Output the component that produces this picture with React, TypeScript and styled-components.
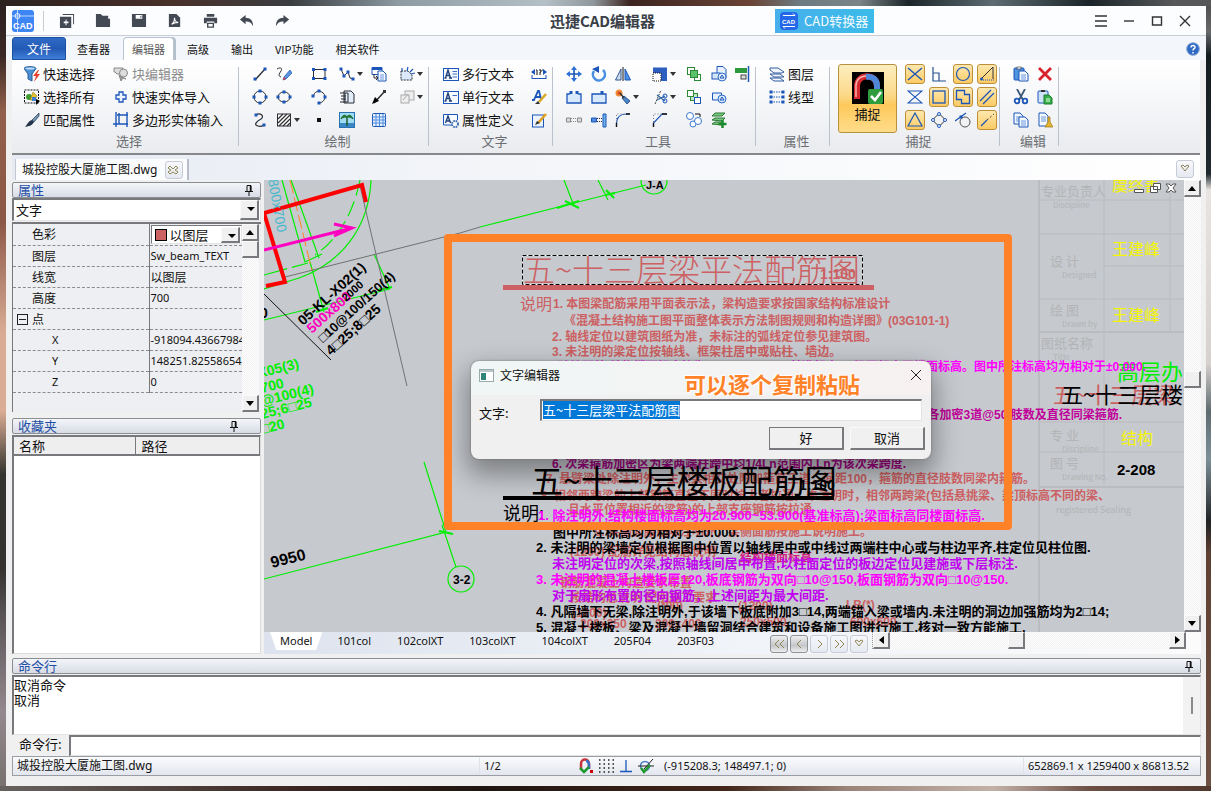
import React, { useEffect, useRef } from "react";
import styled, { createGlobalStyle, css } from "styled-components";

const ui = `"Noto Sans", "Noto Sans CJK SC", sans-serif`;
const cjk = `"Noto Sans CJK SC", sans-serif`;
const cad = `"Liberation Sans", "Noto Sans CJK SC", sans-serif`;

const Global = createGlobalStyle`
  * { box-sizing: border-box; }
  body { margin: 0; font-family: ${ui}; font-size: 12px; color: #111; }
  button, input, select { font: inherit; color: inherit; }
  button { padding: 0; border: 0; background: none; }
`;

/* ---------- shell ---------- */
const Desktop = styled.div`
  min-height: 100vh;
  display: flex;
  padding: 6px 5px 5px 6px;
  background:
    linear-gradient(90deg, #2b211f, #49302a 14%, #3a3d40 24%, #8d9ba3 33%, #b4c0c6 45%, #8e979b 49%, #3c2420 52%, #6a4436 62%, #6d7a80 66%, #7b8588 71%, #1b2529 75%, #5c6c72 82%, #1a2428 90%, #57585a 97%) top / 100% 6px no-repeat,
    linear-gradient(90deg, #67625f, #3b2520 25%, #1f1510 40%, #44261a 60%, #9b8478 70%, #c3b1a8 82%, #6d4f44 90%, #53382e) bottom / 100% 5px no-repeat,
    linear-gradient(180deg, #4a4b4c, #68696a 4%, #141c20 7%, #20292d 22%, #e8e4e2 24%, #d6d0ce 46%, #5e6b6f 52%, #7c9098 58%, #1f2224 66%, #5f4033 70%, #6e5044) right / 5px 100% no-repeat,
    linear-gradient(180deg, #2b2020, #3a2825 7%, #92604a 14%, #8c5846 28%, #d9ac93 42%, #d9ac93 52%, #33342f 60%, #35322f 72%, #5b5558 78%, #94898e 90%, #77706d) left / 6px 100% no-repeat;
`;
const Window = styled.div`
  flex: 1;
  min-width: 0;
  display: flex;
  flex-direction: column;
  background: #f0f0f1;
`;
const Bar = styled.div`display: flex; align-items: center;`;

const TitleBar = styled.header`
  height: 30px;
  display: grid;
  grid-template-columns: 1fr auto 1fr;
  align-items: center;
  background: #fcfdfe;
  border-bottom: 1px solid #c9cdd6;
  padding: 0 13px 0 6px;
`;
const Logo = styled.svg`width: 22px; height: 22px;`;
const LogoSplit = styled.span`width: 1px; height: 20px; background: #c9ccd0; margin: 0 15px 0 9px;`;
const QuickButton = styled.button`width: 16px; height: 16px; margin-right: 20px; svg { display: block; }`;
const AppTitle = styled.h1`margin: 0; font: 700 15px/20px ${cjk}; color: #3a3f48;`;
const TitleRight = styled(Bar)`justify-content: space-between; padding-left: 120px;`;
const Converter = styled.button`
  height: 24px;
  display: flex;
  align-items: center;
  gap: 6px;
  padding: 0 6px 0 5px;
  color: #f4fbff;
  background: linear-gradient(90deg, #47b0ec, #3cbbe9);
  font: 13px/20px ${cjk};
  white-space: nowrap;
`;
const Controls = styled(Bar)`gap: 12px; button { width: 16px; height: 16px; } svg { display: block; }`;

const TabBar = styled.nav`
  height: 24px;
  display: flex;
  align-items: stretch;
  gap: 4px;
  padding: 1px 6px 0;
  background: #f3f6fb;
`;
const FileTab = styled.button`
  width: 54px;
  margin-right: -2px;
  color: #fff;
  border: 1px solid #1b4fa0;
  border-radius: 3px 3px 0 0;
  background: linear-gradient(#2f6bc6, #2359b5 50%, #3f7fd8);
  font: 12px/20px ${cjk};
`;
const Tab = styled.button<{ $on?: boolean }>`
  padding: 0 8px;
  border: 1px solid transparent;
  border-bottom: 0;
  border-radius: 4px 4px 0 0;
  font: 11px/22px ${cjk};
  ${(p) => p.$on && css`background: #fff; border-color: #b8c4d4; color: #555; box-shadow: 2px 0 0 #b5bfca;`}
`;
const Help = styled.button`margin-left: auto; width: 14px; align-self: center; height: 14px; svg { display: block; }`;

/* ---------- ribbon ---------- */
const Ribbon = styled.section`
  height: 95px;
  margin: 0 6px;
  display: flex;
  background: linear-gradient(#fff, #f7f8fa 40%, #e9ebee);
  border-bottom: 2px solid #85878a;
`;
const Group = styled.div<{ $w: number; $pad: number }>`
  width: ${(p) => p.$w}px;
  padding: 2px 0 0;
  position: relative;
  flex: none;
  display: flex;
  flex-direction: column;
  & > div { padding-left: ${(p) => p.$pad}px; }
  &::after {
    content: "";
    position: absolute;
    right: 0;
    top: 7px;
    bottom: 7px;
    width: 1px;
    background: #bcc2cc;
  }
`;
const GroupName = styled.span`padding-left: 7px; text-align: center; font: 13px/20px ${cjk}; color: #6b6e73;`;
const Cells = styled.div<{ $cols: string }>`
  display: grid;
  grid-template-columns: ${(p) => p.$cols};
  grid-auto-rows: 23px;
  align-items: center;
`;
const Tool = styled.button<{ $off?: boolean }>`
  display: flex;
  align-items: center;
  gap: 3px;
  font: 13px/20px ${cjk};
  white-space: nowrap;
  color: ${(p) => (p.$off ? "#8c8c8c" : "#111")};
  svg { flex: none; }
`;
const Caret = styled.i`
  margin-left: -1px;
  border: 3px solid transparent;
  border-top: 4px solid #333;
  border-bottom: 0;
`;
const SnapRow = styled.div`display: flex; gap: 8px; height: 69px;`;
const Snap = styled.button`
  width: 59px;
  height: 69px;
  margin-top: 2px;
  border: 1px solid #b8913f;
  border-radius: 3px;
  background: linear-gradient(#fdeebf, #fbd98a 45%, #fdc95b 60%, #ffdc8a);
  display: flex;
  flex-direction: column;
  align-items: center;
  padding-top: 7px;
  font: 13px/20px ${cjk};
`;
const Toggle = styled.button<{ $on?: boolean }>`
  width: 20px;
  height: 20px;
  display: grid;
  place-items: center;
  border-radius: 3px;
  border: 1px solid ${(p) => (p.$on ? "#bd8f37" : "transparent")};
  background: ${(p) => (p.$on ? "linear-gradient(#fde8b0,#fdcb64)" : "none")};
`;

/* ---------- document strip ---------- */
const DocStrip = styled.div`
  height: 25px;
  display: flex;
  align-items: flex-end;
  margin: 0 6px;
  padding: 0 6px 0 3px;
  background: linear-gradient(90deg, #e6eaf3, #f3f5f9 40%, #fff);
`;
const DocTab = styled.div`
  height: 21px;
  display: flex;
  align-items: center;
  gap: 8px;
  padding: 0 4px 0 6px;
  background: #fbfcfd;
  border-right: 2px solid #b8bdc6;
  border-left: 1px solid #c3c8d0;
  font: 12px/20px ${ui};
`;
const SmallKey = styled.button<{ $dim?: boolean }>`
  width: 18px;
  height: 18px;
  display: grid;
  place-items: center;
  border: 1px solid ${(p) => (p.$dim ? "#8e9196" : "#c6cbd6")};
  border-radius: 3px;
  background: ${(p) => (p.$dim ? "linear-gradient(#eee,#c4c6c9 60%,#eee)" : "linear-gradient(#f7f8fb,#e6e9f1)")};
`;
const DocMenu = styled(SmallKey)`margin: 0 0 2px auto;`;

/* ---------- body ---------- */
const Body = styled.main`
  flex: 1;
  min-height: 0;
  display: flex;
  gap: 3px;
  padding: 0 5px 0 6px;
`;
const Side = styled.aside`
  width: 249px;
  flex: none;
  display: flex;
  flex-direction: column;
  padding-top: 2px;
`;
const PanelHead = styled.div<{ $inset?: number }>`
  height: 16px;
  flex: none;
  display: flex;
  align-items: center;
  justify-content: space-between;
  padding: 0 ${(p) => p.$inset ?? 7}px 0 5px;
  border: 1px solid #8b8e93;
  border-radius: 2px;
  background: linear-gradient(#f3f5f9, #d8dce6);
  color: #1f4fa5;
  font: 13px/14px ${cjk};
`;
const FavHead = styled(PanelHead)`margin-top: 6px;`;
const sunken = css`
  border: 1px solid;
  border-width: 2px 1px 1px 2px;
  border-color: #77797c #e3e3e3 #e3e3e3 #77797c;
  background: #fff;
`;
const raised = css`
  border: 1px solid;
  border-width: 1px 2px 2px 1px;
  border-color: #fafafa #77797c #77797c #fafafa;
  background: #f0f0f0;
`;
const SelectWrap = styled.div`
  position: relative;
  display: flex;
  &::after {
    content: "";
    position: absolute;
    right: 6px;
    top: 9px;
    border: 4px solid transparent;
    border-top-color: #000;
    border-bottom: 0;
    pointer-events: none;
  }
  &::before {
    content: "";
    position: absolute;
    right: 2px;
    top: 2px;
    bottom: 1px;
    width: 16px;
    ${raised}
    pointer-events: none;
  }
`;
const KindSelect = styled.select`
  ${sunken}
  appearance: none;
  flex: 1;
  min-width: 0;
  height: 23px;
  padding: 0 2px;
  font: 13px/20px ${cjk};
`;
const LayerSelect = styled(KindSelect)`height: 19px; padding-left: 18px; border-width: 1px; font: 13px/17px ${cjk};`;
const Swatch = styled.span`
  position: absolute;
  z-index: 1;
  left: 4px;
  top: 4px;
  width: 12px;
  height: 12px;
  background: #cd6265;
  border: 1px solid #000;
`;
const Props = styled.div`
  height: 190px;
  flex: none;
  display: flex;
  margin-top: 1px;
  border-top: 2px solid #77797c;
  border-left: 1px solid #77797c;
  background: #eeeff2;
`;
const PropTable = styled.table`
  width: 229px;
  align-self: flex-start;
  table-layout: fixed;
  border-collapse: collapse;
  font: 11px/16px ${ui};
  th, td { height: 21px; padding: 0; border-bottom: 1px dashed #8a8c90; white-space: nowrap; overflow: hidden; font-weight: 400; text-align: left; }
  th { width: 136px; border-right: 1px solid #77797c; padding-left: 19px; }
  th.sub { padding-left: 39px; }
  th.top { padding-left: 4px; }
  td { padding-left: 1px; }
  .c { font: 12px/16px ${cjk}; }
`;
const Box = styled.span`
  display: inline-block;
  width: 11px;
  height: 11px;
  margin-right: 4px;
  border: 1px solid #222;
  vertical-align: -1px;
  background: linear-gradient(#222, #222) center / 7px 1px no-repeat;
`;
const Scroll = styled.div<{ $h?: boolean }>`
  flex: none;
  display: flex;
  flex-direction: ${(p) => (p.$h ? "row" : "column")};
  ${(p) => (p.$h ? "height: 17px;" : "width: 17px;")}
  background: repeating-conic-gradient(#fff 0 25%, #f0f0f0 0 50%) 0 0 / 2px 2px;
`;
const Key = styled.button`
  ${raised}
  width: 17px;
  height: 17px;
  flex: none;
  display: grid;
  place-items: center;
`;
const Gap = styled.span<{ $grow: number }>`flex: ${(p) => p.$grow} 1 0;`;

const FavTable = styled.table`
  border-collapse: collapse;
  width: 100%;
  font: 13px/17px ${cjk};
  th { height: 18px; padding: 0 6px 0 5px; text-align: left; font-weight: 400; background: #eeeeef; border-right: 1px solid #77797c; border-bottom: 2px solid #77797c; }
`;
const FavBox = styled.div`
  flex: 1;
  margin-top: 1px;
  border: 1px solid #dcdcdc;
  border-top: 2px solid #77797c;
  border-left: 2px solid #77797c;
  background: #fff;
`;

const Work = styled.section`flex: 1; min-width: 0; display: flex; flex-direction: column;`;
const View = styled.div`flex: 1; display: flex; min-height: 452px;`;
const Canvas = styled.div`
  flex: 1;
  position: relative;
  overflow: hidden;
  background: #c6c9ce;
  & > svg { position: absolute; inset: 0; width: 100%; height: 100%; }
`;
const Mark = styled.div`
  position: absolute;
  left: 180px;
  top: 54px;
  width: 568px;
  height: 296px;
  border: 8px solid #ff8228;
  border-radius: 4px;
  pointer-events: none;
`;
const Dialog = styled.form`
  position: absolute;
  left: 207px;
  top: 181px;
  width: 460px;
  height: 98px;
  border-radius: 8px;
  background: linear-gradient(100deg, #f0f6f6, #f4f3f3 60%, #f7f1f1) top / 100% 34px no-repeat, #f0f0f0;
  box-shadow: 0 0 2px #666, 0 12px 26px 4px rgba(0, 0, 0, 0.36);
  font: 12px/16px ${cjk};
`;
const DialogHead = styled.div`
  height: 28px;
  display: flex;
  align-items: center;
  gap: 6px;
  padding: 0 8px;
  border-radius: 8px;
  button { margin-left: auto; width: 14px; height: 14px; }
  svg { display: block; }
`;
const DialogLine = styled.div`
  display: flex;
  align-items: center;
  padding: 10px 9px 0 8px;
  font: 13px/16px ${cjk};
  label { width: 61px; padding-top: 6px; }
  input { ${sunken} flex: 1; min-width: 0; height: 22px; padding: 0 1px 3px; outline: 0; }
  input::selection { background: #0078d7; color: #fff; }
`;
const DialogKeys = styled.div`
  display: flex;
  justify-content: flex-end;
  gap: 6px;
  padding: 6px 6px 0 0;
`;
const DialogKey = styled.button<{ $main?: boolean }>`
  ${raised}
  ${(p) => p.$main && css`border-color: #77797c;`}
  width: 75px;
  height: 23px;
  font: 13px/16px ${cjk};
`;
const Note = styled.strong`
  position: absolute;
  left: 420px;
  top: 188px;
  font: 700 22px/30px ${cjk};
  color: #ff8228;
  text-shadow: 0 0 2px #fff, 1px 1px 0 #fff, -1px -1px 0 #fff;
`;
const ChildKeys = styled.div`
  position: absolute;
  right: 7px;
  top: 2px;
  display: flex;
  gap: 4px;
  button { width: 12px; height: 12px; }
  svg { display: block; }
`;
const SheetRow = styled.div`
  height: 22px;
  flex: none;
  display: flex;
  align-items: flex-start;
  padding-left: 6px;
  background: linear-gradient(90deg, #dde3ee, #f0f3f8 50%, #fbfbfc);
`;
const Sheet = styled.button<{ $on?: boolean }>`
  height: 18px;
  padding: 0 13px;
  font: 11px/16px ${ui};
  ${(p) => p.$on && css`background: #fff; clip-path: polygon(0 0, 100% 0, 88% 100%, 12% 100%); padding: 0 10px; margin-right: 2px;`}
`;
const SheetKeys = styled.div`margin: 3px 4px 0 auto; display: flex; gap: 2px;`;
const HScroll = styled(Scroll)`width: 314px; margin-right: 15px; border-left: 1px dotted #999;`;

/* ---------- bottom ---------- */
const Bottom = styled.footer`padding: 4px 5px 10px 6px;`;
const Log = styled.div`
  ${sunken}
  height: 60px;
  margin-top: 1px;
  display: flex;
  justify-content: space-between;
  font: 13px/15px ${cjk};
  p { margin: 0; }
`;
const LogRail = styled.div`width: 17px; background: #f2f2f2; display: grid; place-items: center; &::after { content: ""; width: 2px; height: 17px; background: #8b8b8b; }`;
const Command = styled.div`
  display: flex;
  align-items: center;
  height: 21px;
  font: 13px/16px ${cjk};
  label { width: 57px; padding: 0 0 3px 7px; }
  input { ${sunken} flex: 1; height: 21px; min-width: 0; outline: 0; }
`;
const Status = styled.div`
  height: 20px;
  display: flex;
  align-items: center;
  border: 1px solid #9a9da3;
  background: linear-gradient(#fafbfc, #e3e6ef);
  font: 11px/16px ${ui};
  white-space: nowrap;
  .file { flex: 0 0 466px; padding-left: 4px; font-size: 12px; }
  .page { flex: 0 0 99px; padding-left: 4px; border-left: 1px solid #dfe2e8; }
  .pos { flex: 1; padding-left: 6px; }
  .size { border-left: 1px solid #dfe2e8; padding: 0 11px 0 4px; }
  svg { flex: none; margin-right: 4px; }
`;

/* ---------- icons ---------- */
const B = "#1c56b8";
const D = "#2a2d33";
const dots = (pts: number[][]) => pts.map(([x, y], i) => <rect key={i} x={x - 1.5} y={y - 1.5} width="3" height="3" fill={B} />);
const page = (x: number, y: number, w = 9, h = 11) => (
  <g>
    <path d={`M${x} ${y}h${w - 3}l3 3v${h - 3}h-${w}z`} fill="#f4f9ff" stroke={B} />
    <path d={`M${x + 2} ${y + 4}h${w - 4}m-${w - 4} 2h${w - 4}m-${w - 4} 2h${w - 4}`} stroke="#4d82d6" strokeWidth=".8" />
  </g>
);
const art: Record<string, React.ReactNode> = {
  filter: <><path d="M0 2.500c0-2.500 12-2.500 12 0L8 8v7l-4-2V8z" fill="#4d8fd0" stroke="#2b5f9c" /><ellipse cx="6" cy="2.600" rx="4.500" ry="1" fill="#bfe0fa" /><path d="M14 4l-5 6h3l-2 6 6-8h-3l2-4z" fill="#e8402e" /></>,
  selectAll: <><rect x=".5" y="1" width="14" height="13" fill="none" stroke="#111" strokeDasharray="2 1" /><circle cx="5" cy="8" r="3" fill="#3f9b2e" /><path d="M9 3l4 4-2 4H6z" fill="#e8c12c" stroke="#8d7a18" strokeWidth=".6" /><rect x="8" y="8" width="4" height="4" fill="#3c7fd0" /><path d="M12 10v6l4-4z" /></>,
  brush: <><path d="M15 1L8 8l2 2 5-6z" fill="#7895b4" stroke="#31455e" strokeWidth=".8" /><path d="M8 8l2 2c-2 4-5 4-9 5 2-2 3-6 7-7z" fill="#24344c" /></>,
  blockEdit: <g fill="#ddd" stroke="#8a8a8a"><path d="M1 2h9v6H4L2 6H1z" /><circle cx="10.500" cy="7" r="4" /><path d="M6 9l2 6 2-3 3 1z" fill="#999" /></g>,
  plus: <path d="M6 3h4v3h3v4h-3v3H6v-3H3V6h3z" fill="#eaf3ff" stroke={B} strokeWidth="1.300" />,
  frame: <path d="M3 0v15M0 12h15M6 1v11M4 3h11M14 0v15" fill="none" stroke={B} strokeWidth="1.400" />,
  line: <><path d="M3 14L13 3" stroke={D} strokeWidth="1.300" />{dots([[3, 13], [13, 3]])}</>,
  sketch: <><path d="M1 3c3-2 6-1 4 2s-3 5 0 6" fill="none" stroke={D} /><path d="M14 4l-6 7-1 3 3-1 6-6z" fill="#5a93e0" stroke={B} strokeWidth=".7" /><path d="M8 11l-1 3 3-1z" fill="#d33" /></>,
  rect: <><path d="M2.500 3.500h11.500v9H2.500z" fill="none" stroke={D} />{dots([[2.500, 3.500], [14, 3.500], [2.500, 12.500], [14, 12.500]])}</>,
  pline: <><path d="M2 3l3 7 4-4 2 6 4 1" fill="none" stroke={D} />{dots([[2, 3], [5, 10], [9, 6], [14, 13]])}</>,
  insert: <><path d="M1 1.500h10v7H1z" fill="#fff" stroke={B} /><path d="M1 1.500h10v2.500H1z" fill={B} />{page(7, 5, 8, 10)}<path d="M3 8v4h4m-2-2l2 2-2 2" fill="none" stroke={D} /></>,
  region: <><path d="M2 5h7l4 4v5H2z" fill="#dbe9fb" stroke={D} strokeDasharray="2 1" /><path d="M8 5l1-4m2 5l3-3m-2 5l4-1M3 5V2" stroke={B} strokeWidth="1.200" /></>,
  circle: <><circle cx="8" cy="8" r="6" fill="none" stroke={D} />{dots([[8, 2], [8, 14], [2, 8], [14, 8]])}</>,
  ellipse: <><ellipse cx="8" cy="8" rx="6" ry="5" fill="none" stroke={D} />{dots([[8, 3], [8, 13], [2, 8], [14, 8]])}</>,
  arc: <><path d="M2.500 7c1-7 11-6 11.500 1 0 3-3 6-6 6" fill="none" stroke={D} />{dots([[8, 2], [2, 7], [14, 8], [8, 14]])}</>,
  scroll: <><path d="M5 2h7l3 3v9H5z" fill="#e4eefb" stroke={D} /><path d="M1 4h8v9H1m1-6h5M2 10h5M6 4v9" fill="none" stroke={D} /></>,
  ray: <><path d="M3 14L14 2" stroke={D} strokeWidth="1.500" /><path d="M1 15l3-7 4 4z" /><rect x="12" y="1" width="3" height="3" fill="#333" /></>,
  copyOff: <g fill="#eee" stroke="#aaa"><rect x="6" y="2" width="9" height="9" /><rect x="2" y="6" width="8" height="8" /><path d="M4 11l5-6" /></g>,
  spline: <><path d="M4 3c4-3 9 1 5 4-4 2-8 6-3 7 3 1 4 0 7-1" fill="none" stroke={D} strokeWidth="1.200" />{dots([[4, 3], [12, 13]])}</>,
  hatch: <><rect x="1.500" y="2" width="13" height="12" fill="#fff" stroke={D} /><path d="M2 7l5-5M2 11l9-9M3 14L14 3M7 14l7-7m-3 7l3-3" stroke="#333" strokeWidth="1.300" /></>,
  point: <rect x="6" y="6" width="4" height="4" fill="#111" />,
  image: <><rect x=".5" y=".5" width="15" height="15" fill="#9fdcf4" stroke="#2772b0" /><path d="M1 11h14v4H1z" fill="#3b86c5" /><path d="M8 5c-1-3-5-2-6 2 2-2 4-2 6-2 2 0 4 0 6 2-1-4-5-5-6-2" fill="#2a8a3a" stroke="#1d6a2c" /><path d="M8 5v9" stroke="#1d5a2c" strokeWidth="1.500" /></>,
  table: <><rect x="1.500" y="1.500" width="13" height="13" rx="1" fill="#e5f0fd" stroke={B} /><path d="M1.500 5h13M1.500 8h13M1.500 11h13M5 2v12m3.500-12v12M12 2v12" stroke="#4e8be0" /></>,
  mtext: <><rect x=".5" y="2.500" width="15" height="12" fill="#f6faff" stroke={B} /><path d="M2.500 12l2.500-8 2.500 8M4 9.500h2.500M1.500 12h2m2.500 0h3" fill="none" stroke="#1f3f7a" strokeWidth="1.400" /><path d="M9.500 5.500h4.500m-4.500 2.500h4.500m-4.500 3h4.500" stroke="#3d6fc0" /></>,
  text: <><rect x=".5" y="2.500" width="15" height="12" fill="#f6faff" stroke={B} /><path d="M2.500 12l2.500-8 2.500 8M4 9.500h2.500M1.500 12h2m2.500 0h3" fill="none" stroke="#1f3f7a" strokeWidth="1.400" /><path d="M9.500 6.500h4.500" stroke="#3d6fc0" /></>,
  attdef: <><path d="M9 13H.5V2.500h14V8" fill="#f6faff" stroke={B} /><path d="M2.500 11l2.500-7 2.500 7M4 9h2.500" fill="none" stroke="#1f3f7a" strokeWidth="1.400" /><circle cx="12" cy="12" r="3" fill="#fff" stroke="#3e6fae" strokeWidth="2" strokeDasharray="1.600 .8" /></>,
  find: <><path d="M0 6l4-3v6zm16 0l-4-3v6z" fill={B} /><path d="M1 13V9m14 4V9M1 12.500h14" stroke={B} fill="none" /><path d="M5 4h1v5M8 4h2v2H9v3M11 4h1" stroke="#111" fill="none" /></>,
  textEdit: <><path d="M1 11h2L7 2h1l2 8M4 8h5" fill="none" stroke={B} strokeWidth="1.800" /><path d="M15 5l-7 8" stroke="#d9a928" strokeWidth="2.500" /><path d="M4 15h5l-2-3z" fill="#333" /></>,
  editPen: <><rect x="1.500" y="3" width="11" height="12" fill="#eaf3ff" stroke={B} /><path d="M15 2L7 11" stroke="#e0a020" strokeWidth="2.600" /><path d="M4 13l2-4 3 2z" fill="#333" /></>,
  move: <><path d="M8 2v12M2 8h12" stroke={B} strokeWidth="1.600" /><path d="M8 0l3 4H5zm0 16l3-4H5zM0 8l4-3v6zm16 0l-4-3v6z" fill="#2b6fd6" /></>,
  rotate: <><path d="M3 5a6 6 0 1 0 9-1" fill="none" stroke="#4a90e2" strokeWidth="2.600" /><path d="M8 0v7L1 3z" fill={B} /></>,
  mirror: <><path d="M6 3v11H.5z" fill="#cfdcec" stroke="#30588f" /><path d="M8 1v14" stroke="#111" /><path d="M10 3v11h5.500z" fill="#4b93e8" stroke={B} /></>,
  scale: <><rect x="1" y="1.500" width="14" height="13.500" fill="#2c5fc0" /><rect x="1" y="7" width="8" height="8" fill="#fff" stroke="#111" strokeDasharray="1 1" /></>,
  front: <><rect x="1.500" y="1.500" width="7" height="7" fill="#fff" stroke="#2d8a34" /><rect x="8.500" y="8.500" width="6" height="6" fill="#fff" stroke="#2d8a34" /><rect x="4.500" y="4.500" width="7" height="7" fill="#5cc26a" stroke="#2d8a34" /></>,
  viewA: <><path d="M6 .5h6l3 3v9H6z" fill="#e7f1ff" stroke={B} /><rect x="1" y="7" width="8" height="6" fill="#d5e6fb" stroke={B} /><circle cx="11" cy="11" r="4" fill="#e5effc" stroke="#2e6cc7" /><path d="M9 12l2-3 2 3z" fill="none" stroke={B} /></>,
  align: <><rect x="1" y="2" width="12" height="5" fill="#2c9a3c" /><rect x="7" y="9" width="5" height="4" fill="#ddd" stroke="#444" /><path d="M14.500 0v16" stroke={B} strokeWidth="1.500" /></>,
  trim: <><path d="M4 5H1v9h14V5h-3" fill="#d9e9fd" stroke={B} strokeWidth="1.300" />{dots([[5, 3.500], [11, 3.500]])}</>,
  extend: <><path d="M1 5h14v9H1z" fill="#d9e9fd" stroke={B} strokeWidth="1.300" />{dots([[11, 3.500]])}</>,
  explode: <><circle cx="4" cy="4" r="3.500" fill="#f08a35" /><circle cx="4" cy="4" r="1.500" fill="#d9432a" /><path d="M9 7l-2 2 5 6 3-3z" fill="#4b86c8" stroke="#30588f" /><path d="M5 4l4 5" stroke="#333" strokeWidth="1.500" /></>,
  cutLine: <><path d="M3 15L9 1" stroke="#444" strokeDasharray="2 1" /><path d="M5 6l8 6m-8-1l8-4" stroke="#33679e" strokeWidth="1.300" /><circle cx="13" cy="7" r="2" fill="none" stroke={B} /><circle cx="13" cy="12" r="2" fill="none" stroke={B} /></>,
  back: <><rect x="4.500" y="4.500" width="7" height="7" fill="#bfe8c4" stroke="#2d8a34" /><rect x="1.500" y="1.500" width="6" height="6" fill="#fff" stroke="#2d8a34" /><rect x="8.500" y="8.500" width="6" height="6" fill="#fff" stroke={B} /></>,
  viewB: <><path d="M1.500 4h9v7h-9z" fill="#e7f1ff" stroke={B} /><circle cx="11" cy="10" r="4" fill="#d5e6fb" stroke="#2e6cc7" /><path d="M9 11l2-3 2 3z" fill="none" stroke={B} /></>,
  stretch: <><path d="M.5 6h4v4h-4zm11 0h4v4h-4z" fill="#ddd" stroke="#888" /><path d="M5 6.500h6M5 9.500h6" stroke="#888" strokeDasharray="1 1" /></>,
  lengthen: <><path d="M.5 6h5v4h-5z" fill="#4b8be0" stroke={B} /><path d="M6 6.500h6M6 9.500h6" stroke={D} strokeDasharray="1 1" /><path d="M12 2h3v13h-3z" fill="#6db1ec" stroke={B} /></>,
  fillet: <><path d="M1.500 15v-3c0-7 4-10 10-10h3" fill="none" stroke={B} strokeWidth="1.200" /><path d="M1.500 15v-4M11 2h4" stroke="#111" strokeWidth="1.300" /><path d="M1.500 10V2H10" fill="none" stroke="#777" strokeDasharray="1 2" /></>,
  chamfer: <><path d="M1.500 15v-4L10 2h5" fill="none" stroke={B} strokeWidth="1.200" /><path d="M1.500 15v-4M10 2h5" stroke="#111" strokeWidth="1.300" /><path d="M1.500 10V2H10" fill="none" stroke="#777" strokeDasharray="1 2" /></>,
  rings: <g fill="#fff" stroke="#3b7bd0"><circle cx="4" cy="4" r="3.500" /><circle cx="7" cy="12" r="3" /><circle cx="12" cy="9" r="3.500" /><path d="M9 2h5v3" stroke="#111" fill="none" /></g>,
  stackAdd: <><path d="M1 4l3-3h10l-3 3zm0 4l3-2h10l-3 3zm0 4l3-2h7v3z" fill="#7bc67f" stroke="#2b7a35" /><path d="M11.500 8v8m-4-4h8" stroke="#1c8a2c" strokeWidth="2.500" /></>,
  layers: <g fill="#f2f7ff" stroke="#335a9e"><path d="M1 12l4 3h10l-4-3H3z" /><path d="M1 8l4 3h10l-4-3H3z" /><path d="M1 2h8l6 4-2 1H5L1 4z" /></g>,
  ltype: <><path d="M2 3h12M2 8h12M2 13h12" stroke={B} strokeDasharray="1.500 1" />{dots([[2, 3], [14, 3], [2, 8], [14, 8], [2, 13], [14, 13]])}</>,
  sx: <path d="M1 2l14 12M1 14L15 2" stroke={B} strokeWidth="1.400" />,
  perp: <path d="M2 1v14h13M2 7h6v8" fill="none" stroke="#27508f" strokeWidth="1.200" />,
  scirc: <circle cx="8" cy="8" r="6.500" fill="none" stroke={B} strokeWidth="1.200" />,
  sang: <><path d="M2 13L14 1v12" fill="none" stroke="#333" /><path d="M4 14h11" stroke={B} strokeDasharray="1 1" /><circle cx="2.500" cy="13" r="1.500" fill={B} /></>,
  glass: <path d="M1 2h14L1 14h14L1 2z" fill="none" stroke={B} strokeWidth="1.100" />,
  ssq: <rect x="2" y="2" width="12" height="12" fill="none" stroke={B} strokeWidth="1.300" />,
  sblk: <path d="M1.500 1.500h8v4h5v9h-8v-4h-5z" fill="none" stroke={B} strokeWidth="1.300" />,
  spar: <path d="M1 12L12 1M4 15L15 4" stroke={B} strokeWidth="1.300" />,
  stri: <path d="M8 1l7 13H1z" fill="none" stroke={B} strokeWidth="1.200" />,
  quad: <><path d="M8 1.500l6.500 6.500-6.500 6.500-6.500-6.500z" fill="none" stroke={D} /><g fill="#fff" stroke={B}><circle cx="8" cy="2" r="1.500" /><circle cx="14" cy="8" r="1.500" /><circle cx="8" cy="14" r="1.500" /><circle cx="2" cy="8" r="1.500" /></g></>,
  tan: <><circle cx="10" cy="10" r="5" fill="none" stroke="#555" /><path d="M0 9L11 1" stroke={B} strokeWidth="1.200" />{dots([[6, 5]])}</>,
  sext: <><path d="M2 14l6-6" stroke={B} strokeWidth="1.300" /><path d="M8 8l7-6" stroke="#444" strokeDasharray="2 2" /></>,
  paste: <><rect x="1" y="2" width="10" height="12" rx="1" fill="#4f92dd" stroke={B} /><rect x="4" y="1" width="4" height="2" fill="#fff" stroke="#333" strokeWidth=".6" />{page(6, 5, 9, 10)}</>,
  del: <path d="M2 2l12 12M14 2L2 14" stroke="#d8232b" strokeWidth="2.800" />,
  cut: <><path d="M4 0l6 11M12 0L6 11" stroke="#3d5878" strokeWidth="1.800" /><circle cx="4" cy="12" r="2.300" fill="none" stroke={B} strokeWidth="1.800" /><circle cx="12" cy="12" r="2.300" fill="none" stroke={B} strokeWidth="1.800" /></>,
  pasteG: <><rect x="1" y="2" width="10" height="12" rx="1" fill="#cfe4fa" stroke={B} /><rect x="4" y="1" width="4" height="2" fill="#333" /><path d="M7 6h5l3 3v6H7z" fill="#35b14a" stroke="#1c7a2e" /><path d="M9 10h4m-4 2h4" stroke="#eaffea" /></>,
  copy: <>{page(1, 1, 9, 11)}{page(6, 5, 9, 10)}</>,
  clean: <>{page(2, 1, 9, 13)}<path d="M11 5h2v5l3 5H8l3-5z" fill="#e8b530" stroke="#9a7415" strokeWidth=".7" /></>,
};
const Ico = ({ n }: { n: string }) => (
  <svg width="16" height="16" viewBox="0 0 16 16" aria-hidden="true">{art[n]}</svg>
);
const arrowPath = { up: "M0 5l4-5 4 5z", down: "M0 0l4 5 4-5z", left: "M5 0v8L0 4z", right: "M0 0v8l5-4z" };
const Arrow = ({ d }: { d: keyof typeof arrowPath }) => <svg width="8" height="8" viewBox={d === "left" || d === "right" ? "-2 0 8 8" : "0 -2 8 8"}><path d={arrowPath[d]} /></svg>;
const Pin = () => <svg width="8" height="12" viewBox="0 0 8 12" fill="none" stroke="#111"><path d="M2 7V1.500h4V7M0 7.500h8M4 8v4" /><path d="M5.500 2v5" strokeWidth="1.500" /></svg>;

const quick: [string, React.ReactNode][] = [
  ["新建", <><path d="M4 1h12v11h-1V2H4z" /><path d="M1 4h12v12H1zM7 7v2H5v2h2v2h1v-2h2V9H8V7z" fillRule="evenodd" /></>],
  ["打开", <path d="M1 1h5l2 2h6v3h2v9H1z" />],
  ["保存", <path d="M1 1h15v14H1zM5 2v4h7V2zm5 1h1v2h-1z" fillRule="evenodd" />],
  ["导出", <><path d="M2 1h8l4 4v10H2z" /><path d="M5 12c3-2 3-5 3-7 0 3 2 5 4 5-3 0-5 0-7 2z" stroke="#fff" fill="none" strokeWidth="1.200" /></>],
  ["打印", <><path d="M4 1h8v3H4zM1 5h14v6h-3V9H4v2H1z" /><path d="M5 11h6v4H5z" fill="none" stroke="#444a54" strokeWidth="1.500" /></>],
  ["撤销", <path d="M7 2v3c5 0 8 3 8 9-2-4-4-5-8-5v3L1 7z" />],
  ["重做", <path d="M9 2v3c-5 0-8 3-8 9 2-4 4-5 8-5v3l6-5z" />],
];

type T = { n: string; t: string; c?: boolean; off?: boolean };
const drawTools: T[] = [
  { n: "line", t: "直线" }, { n: "sketch", t: "草图" }, { n: "rect", t: "矩形" }, { n: "pline", t: "多段线", c: true }, { n: "insert", t: "插入块" }, { n: "region", t: "区域", c: true },
  { n: "circle", t: "圆" }, { n: "ellipse", t: "椭圆" }, { n: "arc", t: "圆弧" }, { n: "scroll", t: "创建块" }, { n: "ray", t: "射线" }, { n: "copyOff", t: "复制块", c: true, off: true },
  { n: "spline", t: "样条曲线" }, { n: "hatch", t: "填充", c: true }, { n: "point", t: "点" }, { n: "image", t: "图像" }, { n: "table", t: "表格" },
];
const editTools: T[] = [
  { n: "move", t: "移动" }, { n: "rotate", t: "旋转" }, { n: "mirror", t: "镜像" }, { n: "scale", t: "缩放", c: true }, { n: "front", t: "前置" }, { n: "viewA", t: "视图" }, { n: "align", t: "对齐" },
  { n: "trim", t: "修剪" }, { n: "extend", t: "延伸" }, { n: "explode", t: "分解", c: true }, { n: "cutLine", t: "打断", c: true }, { n: "back", t: "后置" }, { n: "viewB", t: "视口" }, { n: "", t: "" },
  { n: "stretch", t: "拉伸" }, { n: "lengthen", t: "拉长" }, { n: "fillet", t: "圆角" }, { n: "chamfer", t: "倒角" }, { n: "rings", t: "编组" }, { n: "stackAdd", t: "添加图层" },
];
const snaps: [string, string, boolean][] = [
  ["sx", "交点", true], ["perp", "垂足", false], ["scirc", "圆心", true], ["sang", "延长", true],
  ["glass", "最近点", false], ["ssq", "端点", true], ["sblk", "插入点", true], ["spar", "平行", true],
  ["stri", "中点", true], ["quad", "象限点", false], ["tan", "切点", false], ["sext", "延伸线", true],
];
const clip: [string, string][] = [["paste", "粘贴"], ["del", "删除"], ["cut", "剪切"], ["pasteG", "粘贴为块"], ["copy", "复制"], ["clean", "清理"]];
const IconTools = ({ items }: { items: T[] }) => (
  <>{items.map((x, i) => x.n ? <Tool key={i} aria-label={x.t} $off={x.off}><Ico n={x.n} />{x.c && <Caret />}</Tool> : <span key={i} />)}</>
);
const TextTool = ({ n, t, off }: { n: string; t: string; off?: boolean }) => <Tool $off={off}><Ico n={n} />{t}</Tool>;

/* ---------- drawing ---------- */
const RED = "#cc6062";
const MAG = "#ff00ff";
const PUR = "#c000f0";
type Row = { x: number; y: number; f: string; s: string; end?: boolean };
const under: Row[] = [
  { x: 553, y: 308, f: RED, s: "1. 本图梁配筋采用平面表示法，梁构造要求按国家结构标准设计" },
  { x: 564, y: 325, f: RED, s: "《混凝土结构施工图平面整体表示方法制图规则和构造详图》(03G101-1)" },
  { x: 552, y: 341, f: RED, s: "2. 轴线定位以建筑图纸为准，未标注的弧线定位参见建筑图。" },
  { x: 552, y: 356, f: RED, s: "3. 未注明的梁定位按轴线、框架柱居中或贴柱、墙边。" },
  { x: 1146, y: 371, f: MAG, end: true, s: "4. 除注明外,结构楼面标高均为20.900~53.900(基准标高)，梁面标高同楼面标高。图中所注标高均为相对于±0.000." },
  { x: 914, y: 405, f: RED, end: true, s: "均为16(2);" },
  { x: 1122, y: 419, f: "#c0009a", end: true, s: "5. 主次梁相交处，主梁在次梁两侧附加箍筋各加密3道@50,肢数及直径同梁箍筋." },
  { x: 552, y: 468, f: "#a00080", s: "6. 次梁箍筋加密区为梁两端柱跨中均1/4Ln范围内,Ln为该次梁跨度." },
  { x: 1035, y: 483, f: RED, end: true, s: "7. 悬臂梁处除注明外，主次梁相交处附加箍筋三道，间距100，箍筋的直径肢数同梁内箍筋。" },
  { x: 1110, y: 500, f: RED, end: true, s: "8. 相邻两跨梁的上部钢筋直径不同时按大者拉通。未注明时，相邻两跨梁(包括悬挑梁、梁顶标高不同的梁、" },
  { x: 568, y: 514, f: RED, s: "且水平位置相近的梁筋)的上部支座钢筋按拉通" },
  { x: 872, y: 536, f: RED, end: true, s: "9. 梁侧面腰筋除注明外，梁侧面筋按施工说明施工。" },
  { x: 570, y: 556, f: RED, s: "(1200) 配筋详见结构总说明" },
  { x: 740, y: 562, f: "#d02080", s: "结构楼面标高" },
  { x: 560, y: 587, f: RED, s: "钢筋混凝土构造要求布置" },
  { x: 570, y: 602, f: RED, s: "按结构总说明 配明施工要求" },
  { x: 572, y: 617, f: RED, s: "(1200)" },
  { x: 580, y: 628, f: RED, s: "200x350" },
  { x: 657, y: 610, f: RED, s: "(*00)" },
  { x: 655, y: 628, f: RED, s: "200x400" },
  { x: 738, y: 610, f: RED, s: "(1200)" },
  { x: 740, y: 626, f: RED, s: "250x500" },
  { x: 846, y: 609, f: RED, s: "LB(*)" },
  { x: 850, y: 626, f: RED, s: "600x600" },
];
const over: Row[] = [
  { x: 538, y: 520, f: MAG, s: "1. 除注明外,结构楼面标高均为20.900~53.900(基准标高);梁面标高同楼面标高." },
  { x: 553, y: 537, f: "#000", s: "图中所注标高均为相对于±0.000." },
  { x: 536, y: 552, f: "#000", s: "2. 未注明的梁墙定位根据图中位置以轴线居中或中线过两端柱中心或与柱边平齐.柱定位见柱位图." },
  { x: 552, y: 568, f: PUR, s: "未注明定位的次梁,按照轴线间居中布置,以柱面定位的板边定位见建施或下层标注." },
  { x: 536, y: 584, f: MAG, s: "3. 未注明的混凝土楼板厚120,板底钢筋为双向□10@150,板面钢筋为双向□10@150." },
  { x: 552, y: 600, f: PUR, s: "对于扇形布置的径向钢筋，上述间距为最大间距." },
  { x: 536, y: 616, f: "#000", s: "4. 凡隔墙下无梁,除注明外,于该墙下板底附加3□14,两端锚入梁或墙内.未注明的洞边加强筋均为2□14;" },
  { x: 536, y: 632, f: "#000", s: "5. 混凝土楼板、梁及混凝土墙留洞结合建筑和设备施工图进行施工,核对一致方能施工." },
];
const Rows = ({ rows, size }: { rows: Row[]; size: number }) => (
  <g fontFamily={cad} fontSize={size} fontWeight="700">
    {rows.map((r, i) => <text key={i} x={r.x} y={r.y} fill={r.f} textAnchor={r.end ? "end" : "start"}>{r.s}</text>)}
  </g>
);
const faint: [number, number, string, string][] = [
  [1041, 196, "专业负责人", "Discipline"], [1050, 266, "设  计", "Designed"], [1050, 315, "绘  图", "Drawn by"],
  [1041, 348, "图纸名称", "Title"], [1050, 440, "专  业", "Discipline"], [1050, 468, "图  号", "Drawing No."],
];
const Drawing = () => (
  <svg>
    <g transform="translate(-264 -180)">
      <g stroke="#bbbcbf" fill="none">
        <path d="M1104 180v307M1170 180v152M1039 200h145M1039 234h145M1104 266h80M1039 299h145M1039 422h145M1039 452h145" />
        <path d="M1039 180v452M1039 332h145M1039 487h145" strokeWidth="2" />
      </g>
      <g fill="#b3b4b5" fontFamily={cjk}>
        {faint.map(([x, y, a, b]) => <g key={y}><text x={x} y={y} fontSize="13">{a}</text><text x={x + 12} y={y + 12} fontSize="8">{b}</text></g>)}
        <text x="1056" y="513" fontSize="9">registered Sealing</text>
      </g>

      <g fill="none" stroke="#00ee00" strokeWidth="1.200">
        <path d="M371 180c-2 48-30 83-72 98l-35 11" />
        <path d="M282 180l23 82 17-8M291 180l28 78" />
        <path d="M264 275l44-12" strokeDasharray="24 5" />
        <path d="M360 180c-6 30-20 58-45 75" strokeDasharray="16 6" />
        <path d="M264 320l126-31M310 262l14 50M374 254l16 35M264 579L446 532l-22-70" />
        <path d="M442 525l14 42M480 227l94-24 72-18M564 180l10 26M598 180l10 20" />
        <path d="M557 208l22-7m-14 0l14 7m26-13l10-2m-9-3l8 8M316 312l12-4m50-18l14-3M439 531l14 3" strokeWidth="2" />
        <circle cx="654" cy="181" r="13" /><circle cx="461" cy="579" r="13" />
      </g>
      <path d="M290 180l22 91" stroke="#ff8228" strokeDasharray="14 4" fill="none" />
      <path d="M285 277L460 233l20-6M360 186l47 200" stroke="#707274" fill="none" />
      <path d="M264 213l98-28 4 17M264 213l21 69-19 4" stroke="#f00" strokeWidth="4" fill="none" />
      <path d="M264 250l88-22m-18-4l18 4-18 8" stroke="#ff00c0" strokeWidth="3" fill="none" />
      <path d="M264 294l67 66" stroke="#111" fill="none" />

      <g fontFamily={cad} fontSize="14">
        <text transform="translate(268 180) rotate(80)" fill="#48b8cc">800x700</text>
        <g fontWeight="700">
          <text x="646" y="189" fontSize="11">J-A</text>
          <text transform="translate(303 326) rotate(-42)">05-KL-X02(1)</text>
          <text transform="translate(312 334) rotate(-42)" fill="#ff00c0">500x800</text>
          <text transform="translate(346 302) rotate(-42)" fontSize="11">2000</text>
          <text transform="translate(323 343) rotate(-42)" fontSize="13">□10@100/150(4)</text>
          <text transform="translate(331 356) rotate(-42)">4□25;8□25</text>
          <text x="260" y="318">0</text>
          <g fill="#00ee00">
            <text transform="translate(259 378) rotate(-14)">X05(3)</text>
            <text transform="translate(262 393) rotate(-14)">700</text>
            <text transform="translate(262 406) rotate(-14)">@100(4)</text>
            <text transform="translate(262 419) rotate(-14)">25;6□25</text>
            <text transform="translate(262 434) rotate(-14)">□20</text>
          </g>
          <text transform="translate(272 568) rotate(-14)" fontSize="16">9950</text>
          <text x="453" y="584" fontSize="12">3-2</text>
        </g>
      </g>

      <g fontFamily={cjk} fill="#f5f500" fontSize="16">
        <text x="1112" y="191">虞终善</text><text x="1112" y="255">王建峰</text><text x="1112" y="321">王建峰</text><text x="1121" y="444">结构</text>
      </g>
      <text x="1117" y="475" fontSize="15" fontWeight="700" fontFamily={cad}>2-208</text>
      <text x="1117" y="380" fontSize="22" fill="#00ee00" fontFamily={cjk}>高层办</text>
      <g fontFamily={cjk} fontSize="22">
        <text x="1053" y="403" fill={RED}>五~十三层梁</text>
        <text x="1061" y="403">五~十三层楼</text>
      </g>

      <text x="523" y="282" fontSize="32" fontWeight="300" fill={RED} fontFamily={cjk}>五~十三层梁平法配筋图</text>
      <text x="820" y="279" fontSize="14" fontWeight="700" fill={RED} fontFamily={cad}>1:100</text>
      <path d="M503 287.500h371" stroke={RED} strokeWidth="5" />
      <rect x="522.500" y="255.500" width="340" height="29" fill="none" stroke="#fff" />
      <rect x="522.500" y="255.500" width="340" height="29" fill="none" stroke="#000" strokeDasharray="4 2" />
      <text x="520" y="310" fontSize="16" fill={RED} fontFamily={cjk}>说明</text>
      <Rows rows={under} size={12} />
      <text x="531" y="493" fontSize="32" fontFamily={cjk}>五~十三层楼板配筋图</text>
      <text x="799" y="490" fontSize="14" fontWeight="700" fontFamily={cad}>1:100</text>
      <path d="M503 498h331" stroke="#000" strokeWidth="4" />
      <text x="503" y="520" fontSize="18" fontFamily={cjk}>说明:</text>
      <Rows rows={over} size={13} />
    </g>
  </svg>
);

const rowsData: [string, string, string][] = [
  ["图层", "Sw_beam_TEXT", "c"], ["线宽", "以图层", "c"], ["高度", "700", "c"], ["点", "", "top c"],
  ["X", "-918094.43667984", "sub"], ["Y", "148251.825586542", "sub"], ["Z", "0", "sub"],
];
const chev = { ll: "M5 0L1 4l4 4M10 0L6 4l4 4", l: "M7 0L3 4l4 4", r: "M4 0l4 4-4 4", rr: "M1 0l4 4-4 4M6 0l4 4-4 4", d: "M1 1l4 5 4-5-2-1-2 2-2-2z", x: "M1 0l3 3 3-3 2 2-3 2 3 2-2 2-3-2-3 2-2-2 3-2-3-2z" };
const Chev = ({ d }: { d: keyof typeof chev }) => <svg width="12" height="10" viewBox="-1 -1 12 10" fill="none" stroke="#8d8555"><path d={chev[d]} /></svg>;

export default function App() {
  const field = useRef<HTMLInputElement>(null);
  useEffect(() => {
    field.current?.focus();
    field.current?.select();
  }, []);
  return (
    <>
      <Global />
      <Desktop>
        <Window>
          <TitleBar>
            <Bar>
              <Logo viewBox="0 0 22 22">
                <rect width="22" height="22" rx="3" fill="#3f86f5" />
                <path d="M0 6h22M5.500 0v22" stroke="#bcd6ff" strokeWidth="1" />
                <circle cx="5.500" cy="6" r="2.500" fill="none" stroke="#e5f0ff" />
                <text x="1" y="19" fontSize="9" fontWeight="700" fill="#fff" fontFamily={cad}>CAD</text>
              </Logo>
              <LogoSplit />
              {quick.map(([t, g]) => (
                <QuickButton key={t} aria-label={t}><svg width="16" height="16" viewBox="0 0 17 17" fill="#444a54">{g}</svg></QuickButton>
              ))}
            </Bar>
            <AppTitle>迅捷CAD编辑器</AppTitle>
            <TitleRight>
              <Converter>
                <svg width="18" height="18" viewBox="0 0 18 18"><rect width="18" height="18" rx="4" fill="#2467e8" /><path d="M3 3.500h12l-2-2M15 14.500H3l2 2" stroke="#fff" fill="none" /><text x="2" y="11.500" fontSize="6" fontWeight="700" fill="#fff" fontFamily={cad}>CAD</text></svg>
                CAD转换器
              </Converter>
              <Controls>
                {[["菜单", "M2 3h12M2 8h12M2 13h12"], ["最小化", "M3 8h10"], ["最大化", "M3.500 4h9v8h-9z"], ["关闭", "M3 3l10 10M13 3L3 13"]].map(([t, d]) => (
                  <button key={t} aria-label={t}><svg width="16" height="16" fill="none" stroke="#333" strokeWidth="1.400"><path d={d} /></svg></button>
                ))}
              </Controls>
            </TitleRight>
          </TitleBar>

          <TabBar>
            <FileTab>文件</FileTab>
            {["查看器", "编辑器", "高级", "输出", "VIP功能", "相关软件"].map((t) => <Tab key={t} $on={t === "编辑器"}>{t}</Tab>)}
            <Help aria-label="帮助">
              <svg width="14" height="14"><circle cx="7" cy="7" r="6.300" fill="#2f69c4" stroke="#86a5d6" /><path d="M5 5.500c0-3 4.500-2.500 4 0-.3 1-2 1.200-2 3M7 10v1.500" stroke="#fff" strokeWidth="1.500" fill="none" /></svg>
            </Help>
          </TabBar>

          <Ribbon>
            <Group $w={227} $pad={12}>
              <Cells $cols="89px 1fr">
                <TextTool n="filter" t="快速选择" /><TextTool n="blockEdit" t="块编辑器" off />
                <TextTool n="selectAll" t="选择所有" /><TextTool n="plus" t="快速实体导入" />
                <TextTool n="brush" t="匹配属性" /><TextTool n="frame" t="多边形实体输入" />
              </Cells>
              <GroupName>选择</GroupName>
            </Group>
            <Group $w={190} $pad={13}>
              <Cells $cols="24px 35px 28px 32px 28px 28px"><IconTools items={drawTools} /></Cells>
              <GroupName>绘制</GroupName>
            </Group>
            <Group $w={124} $pad={14}>
              <Cells $cols="88px 16px">
                <TextTool n="mtext" t="多行文本" /><Tool aria-label="查找"><Ico n="find" /></Tool>
                <TextTool n="text" t="单行文本" /><Tool aria-label="文字样式"><Ico n="textEdit" /></Tool>
                <TextTool n="attdef" t="属性定义" /><Tool aria-label="编辑文字"><Ico n="editPen" /></Tool>
              </Cells>
              <GroupName>文字</GroupName>
            </Group>
            <Group $w={203} $pad={13}>
              <Cells $cols="25px 24px 37px 34px 25px 23px 16px"><IconTools items={editTools} /></Cells>
              <GroupName>工具</GroupName>
            </Group>
            <Group $w={74} $pad={13}>
              <Cells $cols="1fr"><TextTool n="layers" t="图层" /><TextTool n="ltype" t="线型" /><span /></Cells>
              <GroupName>属性</GroupName>
            </Group>
            <Group $w={170} $pad={8}>
              <SnapRow>
                <Snap>
                  <svg width="32" height="32" viewBox="0 0 32 32">
                    <rect width="32" height="32" fill="#000" />
                    <path d="M5 27V14c0-13 20-13 20 0v3" fill="none" stroke="#d42a2f" strokeWidth="6" />
                    <path d="M14 5c7-1 11 3 11 9v5" fill="none" stroke="#4f86d8" strokeWidth="6" />
                    <path d="M4 25V14C4 8 8 4 14 4" fill="none" stroke="#f5b0ac" strokeWidth="1.500" />
                    <rect x="16" y="17" width="15" height="15" rx="2" fill="#2f9c3d" />
                    <path d="M19 24l4 4 6-8" stroke="#fff" strokeWidth="2.500" fill="none" />
                  </svg>
                  捕捉
                </Snap>
                <Cells $cols="24px 24px 24px 20px">
                  {snaps.map(([n, t, on]) => <Toggle key={n} $on={on} aria-label={t} aria-pressed={on}><Ico n={n} /></Toggle>)}
                </Cells>
              </SnapRow>
              <GroupName>捕捉</GroupName>
            </Group>
            <Group $w={59} $pad={13}>
              <Cells $cols="24px 16px">
                {clip.map(([n, t]) => <Tool key={n} aria-label={t}><Ico n={n} /></Tool>)}
              </Cells>
              <GroupName>编辑</GroupName>
            </Group>
          </Ribbon>

          <DocStrip>
            <DocTab>城投控股大厦施工图.dwg<SmallKey aria-label="关闭文档"><Chev d="x" /></SmallKey></DocTab>
            <DocMenu aria-label="文档列表"><Chev d="d" /></DocMenu>
          </DocStrip>

          <Body>
            <Side>
              <PanelHead>属性<Pin /></PanelHead>
              <SelectWrap>
                <KindSelect aria-label="对象类型"><option>文字</option></KindSelect>
              </SelectWrap>
              <Props>
                <PropTable>
                  <tbody>
                    <tr>
                      <th className="c">色彩</th>
                      <td><SelectWrap><Swatch /><LayerSelect aria-label="色彩"><option>以图层</option></LayerSelect></SelectWrap></td>
                    </tr>
                    {rowsData.map(([k, v, c]) => (
                      <tr key={k}><th className={c}>{k === "点" && <Box />}{k}</th><td className={v === "以图层" ? "c" : ""}>{v}</td></tr>
                    ))}
                  </tbody>
                </PropTable>
                <Scroll><Key aria-label="上"><Arrow d="up" /></Key><Key aria-label="滑块" /><Gap $grow={1} /><Key aria-label="下"><Arrow d="down" /></Key></Scroll>
              </Props>
              <FavHead $inset={22}>收藏夹<Pin /></FavHead>
              <FavBox><FavTable><thead><tr><th>名称</th><th>路径</th></tr></thead></FavTable></FavBox>
            </Side>

            <Work>
              <View>
                <Canvas>
                  <Drawing />
                  <Dialog onSubmit={(e) => e.preventDefault()}>
                    <DialogHead>
                      <svg width="15" height="13"><rect x=".5" y=".5" width="14" height="12" fill="#fff" stroke="#9aa" /><rect x="1" y="1" width="13" height="2" fill="#b9c6ce" /><rect x="2" y="4" width="5" height="7" fill="#2f8577" /></svg>
                      文字编辑器
                      <button type="button" aria-label="关闭"><svg width="14" height="14" stroke="#222"><path d="M2 2l10 10M12 2L2 12" /></svg></button>
                    </DialogHead>
                    <DialogLine><label htmlFor="txt">文字:</label><input id="txt" ref={field} defaultValue="五~十三层梁平法配筋图" /></DialogLine>
                    <DialogKeys><DialogKey $main>好</DialogKey><DialogKey type="button">取消</DialogKey></DialogKeys>
                  </Dialog>
                  <Mark />
                  <Note>可以逐个复制粘贴</Note>
                  <ChildKeys>
                    {[["最小化图纸", "M1.500 7.500h9v3h-9z"], ["还原图纸", "M4.500 1.500h7v6h-7zM1.500 4.500h7v6h-7z"], ["关闭图纸", "M1 2h3l2 2 2-2h3L8 6l3 4H8L6 8l-2 2H1l3-4z"]].map(([t, d]) => (
                      <button key={t} aria-label={t}><svg width="12" height="12" fill="#fff" stroke="#555"><path d={d} /></svg></button>
                    ))}
                  </ChildKeys>
                </Canvas>
                <Scroll><Key aria-label="向上"><Arrow d="up" /></Key><Gap $grow={174} /><Key aria-label="垂直滑块" /><Gap $grow={227} /><Key aria-label="向下"><Arrow d="down" /></Key></Scroll>
              </View>
              <SheetRow>
                {["Model", "101col", "102colXT", "103colXT", "104colXT", "205F04", "203F03"].map((t, i) => <Sheet key={t} $on={i === 0}>{t}</Sheet>)}
                <SheetKeys>
                  <SmallKey $dim aria-label="第一页"><Chev d="ll" /></SmallKey>
                  <SmallKey $dim aria-label="上一页"><Chev d="l" /></SmallKey>
                  <SmallKey aria-label="下一页"><Chev d="r" /></SmallKey>
                  <SmallKey aria-label="最后页"><Chev d="rr" /></SmallKey>
                  <SmallKey aria-label="页列表"><Chev d="d" /></SmallKey>
                </SheetKeys>
                <HScroll $h><Key aria-label="向左"><Arrow d="left" /></Key><Gap $grow={118} /><Key aria-label="水平滑块" /><Gap $grow={143} /><Key aria-label="向右"><Arrow d="right" /></Key></HScroll>
              </SheetRow>
            </Work>
          </Body>

          <Bottom>
            <PanelHead>命令行<Pin /></PanelHead>
            <Log><div><p>取消命令</p><p>取消</p></div><LogRail /></Log>
            <Command><label htmlFor="cmd">命令行:</label><input id="cmd" /></Command>
            <Status>
              <span className="file">城投控股大厦施工图.dwg</span>
              <span className="page">1/2</span>
              <svg width="16" height="16" fill="none"><path d="M3 11V6c0-6 8-6 8 0v5" stroke="#c8323a" strokeWidth="2.500" /><path d="M8 3c3 0 3 2 3 4v4" stroke="#3a6fc4" strokeWidth="2.500" /><path d="M2 10l4 4 5-5" stroke="#1f9a30" strokeWidth="2.500" /><rect x="12" y="12" width="3" height="3" fill="#c00" /></svg>
              <svg width="16" height="16"><path d="M1 2h15M1 6h15M1 10h15M1 14h15" stroke="#222" strokeWidth="1.500" strokeDasharray="1.500 3" /></svg>
              <svg width="16" height="16"><path d="M2 13.500h12M8 2v11" stroke="#1c56b8" strokeWidth="1.300" /></svg>
              <svg width="16" height="16" fill="none"><circle cx="7" cy="8" r="4.500" stroke="#4a7ec4" strokeWidth="1.500" /><path d="M0 8h16M6 11L15 1" stroke="#222" /><path d="M3 10l3 4 6-7" stroke="#1f9a30" strokeWidth="2.500" /></svg>
              <span className="pos">(-915208.3; 148497.1; 0)</span>
              <span className="size">652869.1 x 1259400 x 86813.52</span>
            </Status>
          </Bottom>
        </Window>
      </Desktop>
    </>
  );
}
